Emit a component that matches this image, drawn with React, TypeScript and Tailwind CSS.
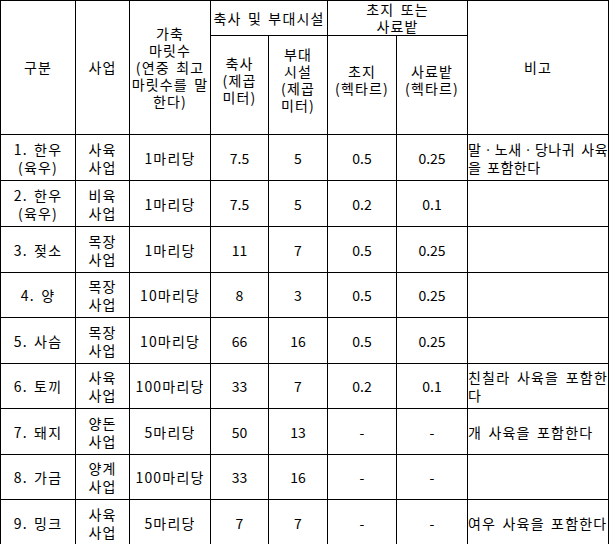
const rows = [
  { h: "h-[46px]", name: ["1. 한우", "(육우)"], biz: ["사육", "사업"], unit: "1마리당", barn: "7.5", extra: "5", grass: "0.5", feed: "0.25", note: "말ㆍ노새ㆍ당나귀 사육을 포함한다", tight: true },
  { h: "h-[46px]", name: ["2. 한우", "(육우)"], biz: ["비육", "사업"], unit: "1마리당", barn: "7.5", extra: "5", grass: "0.2", feed: "0.1", note: "" },
  { h: "h-[46px]", name: ["3. 젖소"], biz: ["목장", "사업"], unit: "1마리당", barn: "11", extra: "7", grass: "0.5", feed: "0.25", note: "" },
  { h: "h-[45px]", name: ["4. 양"], biz: ["목장", "사업"], unit: "10마리당", barn: "8", extra: "3", grass: "0.5", feed: "0.25", note: "" },
  { h: "h-[46px]", name: ["5. 사슴"], biz: ["목장", "사업"], unit: "10마리당", barn: "66", extra: "16", grass: "0.5", feed: "0.25", note: "" },
  { h: "h-[45px]", name: ["6. 토끼"], biz: ["사육", "사업"], unit: "100마리당", barn: "33", extra: "7", grass: "0.2", feed: "0.1", note: "친칠라 사육을 포함한다" },
  { h: "h-[46px]", name: ["7. 돼지"], biz: ["양돈", "사업"], unit: "5마리당", barn: "50", extra: "13", grass: "-", feed: "-", note: "개 사육을 포함한다" },
  { h: "h-[45px]", name: ["8. 가금"], biz: ["양계", "사업"], unit: "100마리당", barn: "33", extra: "16", grass: "-", feed: "-", note: "" },
  { h: "h-[46px]", name: ["9. 밍크"], biz: ["사육", "사업"], unit: "5마리당", barn: "7", extra: "7", grass: "-", feed: "-", note: "여우 사육을 포함한다" },
];

function Lines({ items }: { items: string[] }) {
  return (
    <>
      {items.map((t, i) => (
        <div key={i}>{t}</div>
      ))}
    </>
  );
}

export default function App() {
  const cell = "border border-black text-center align-middle p-0";
  const head = `${cell} font-normal leading-[17px]`;
  const num = `${cell} tracking-normal`;
  return (
    <div className="bg-white w-[610px] h-[544px] text-black font-['Noto_Sans_CJK_KR','Noto_Sans',sans-serif] text-[14px] leading-[18px] tracking-[1.2px] [word-spacing:2px]">
      <table className="table-fixed border-collapse w-[609px]">
        <colgroup>
          <col className="w-[75px]" />
          <col className="w-[54px]" />
          <col className="w-[81px]" />
          <col className="w-[58px]" />
          <col className="w-[59px]" />
          <col className="w-[69px]" />
          <col className="w-[71px]" />
          <col className="w-[141px]" />
        </colgroup>
        <thead>
          <tr className="h-[32px]">
            <th rowSpan={2} className={head}>구분</th>
            <th rowSpan={2} className={head}>사업</th>
            <th rowSpan={2} className={head}>
              <Lines items={["가축", "마릿수", "(연중 최고", "마릿수를 말", "한다)"]} />
            </th>
            <th colSpan={2} className={head}>축사 및 부대시설</th>
            <th colSpan={2} className={`${head} align-top leading-[16px]`}>
              <Lines items={["초지 또는", "사료밭"]} />
            </th>
            <th rowSpan={2} className={head}>비고</th>
          </tr>
          <tr className="h-[99px]">
            <th className={`${head} pb-[10px]`}>
              <Lines items={["축사", "(제곱", "미터)"]} />
            </th>
            <th className={`${head} pb-[10px]`}>
              <Lines items={["부대", "시설", "(제곱", "미터)"]} />
            </th>
            <th className={`${head} pb-[10px]`}>
              <Lines items={["초지", "(헥타르)"]} />
            </th>
            <th className={`${head} pb-[10px]`}>
              <Lines items={["사료밭", "(헥타르)"]} />
            </th>
          </tr>
        </thead>
        <tbody>
          {rows.map((r, i) => (
            <tr key={i} className={r.h}>
              <td className={cell}>
                <Lines items={r.name} />
              </td>
              <td className={cell}>
                <Lines items={r.biz} />
              </td>
              <td className={cell}>{r.unit}</td>
              <td className={num}>{r.barn}</td>
              <td className={num}>{r.extra}</td>
              <td className={num}>{r.grass}</td>
              <td className={num}>{r.feed}</td>
              <td className={`${cell} text-justify ${r.tight ? "tracking-[0.5px]" : ""}`}>{r.note}</td>
            </tr>
          ))}
        </tbody>
      </table>
    </div>
  );
}
